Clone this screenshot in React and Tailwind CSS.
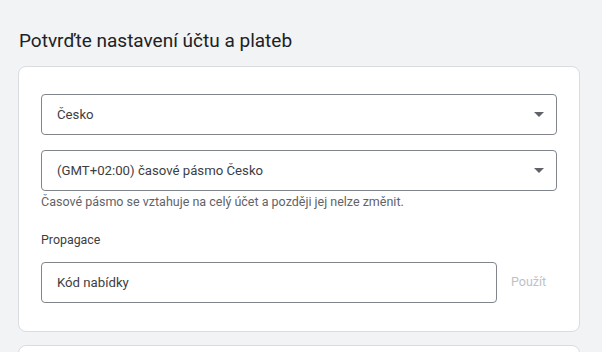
export default function App() {
  const Arrow = () => (
    <svg width="10" height="5" viewBox="0 0 10 5" className="shrink-0">
      <path d="M0 0 L10 0 L5 5 Z" fill="#5f6368" />
    </svg>
  );
  return (
    <div className="w-[602px] h-[352px] overflow-hidden bg-[#f1f3f4] [font-family:Roboto,'Liberation_Sans',sans-serif]">
      <div className="pl-[19px] pt-[28px] h-[66px]">
        <h1 className="text-[19px] leading-[26px] text-[#202124]">
          Potvrďte nastavení účtu a plateb
        </h1>
      </div>
      <div className="ml-[18px] w-[562px] h-[266px] bg-white border border-[#dadce0] rounded-[8px] px-[22px] pt-[27px]">
        <div className="h-[41px] border border-[#80868b] rounded-[4px] flex items-center justify-between pl-[15px] pr-[12px]">
          <span className="text-[13.2px] text-[#3c4043]">Česko</span>
          <Arrow />
        </div>
        <div className="mt-[15px] h-[41px] border border-[#80868b] rounded-[4px] flex items-center justify-between pl-[15px] pr-[12px]">
          <span className="text-[13.2px] text-[#3c4043]">(GMT+02:00) časové pásmo Česko</span>
          <Arrow />
        </div>
        <div className="mt-[2px] text-[12.5px] leading-[18px] text-[#5f6368]">
          Časové pásmo se vztahuje na celý účet a později jej nelze změnit.
        </div>
        <div className="mt-[20px] text-[12.4px] leading-[18px] text-[#3c4043]">Propagace</div>
        <div className="mt-[13px] flex items-center">
          <div className="w-[456px] h-[41px] border border-[#80868b] rounded-[4px] flex items-center pl-[15px]">
            <span className="text-[13.2px] text-[#3c4043]">Kód nabídky</span>
          </div>
          <span className="ml-[14px] text-[12.5px] text-[#bdc1c6]">Použít</span>
        </div>
      </div>
      <div className="ml-[18px] mt-[13px] w-[562px] h-[40px] bg-white border border-[#dadce0] rounded-[8px]"></div>
    </div>
  );
}
